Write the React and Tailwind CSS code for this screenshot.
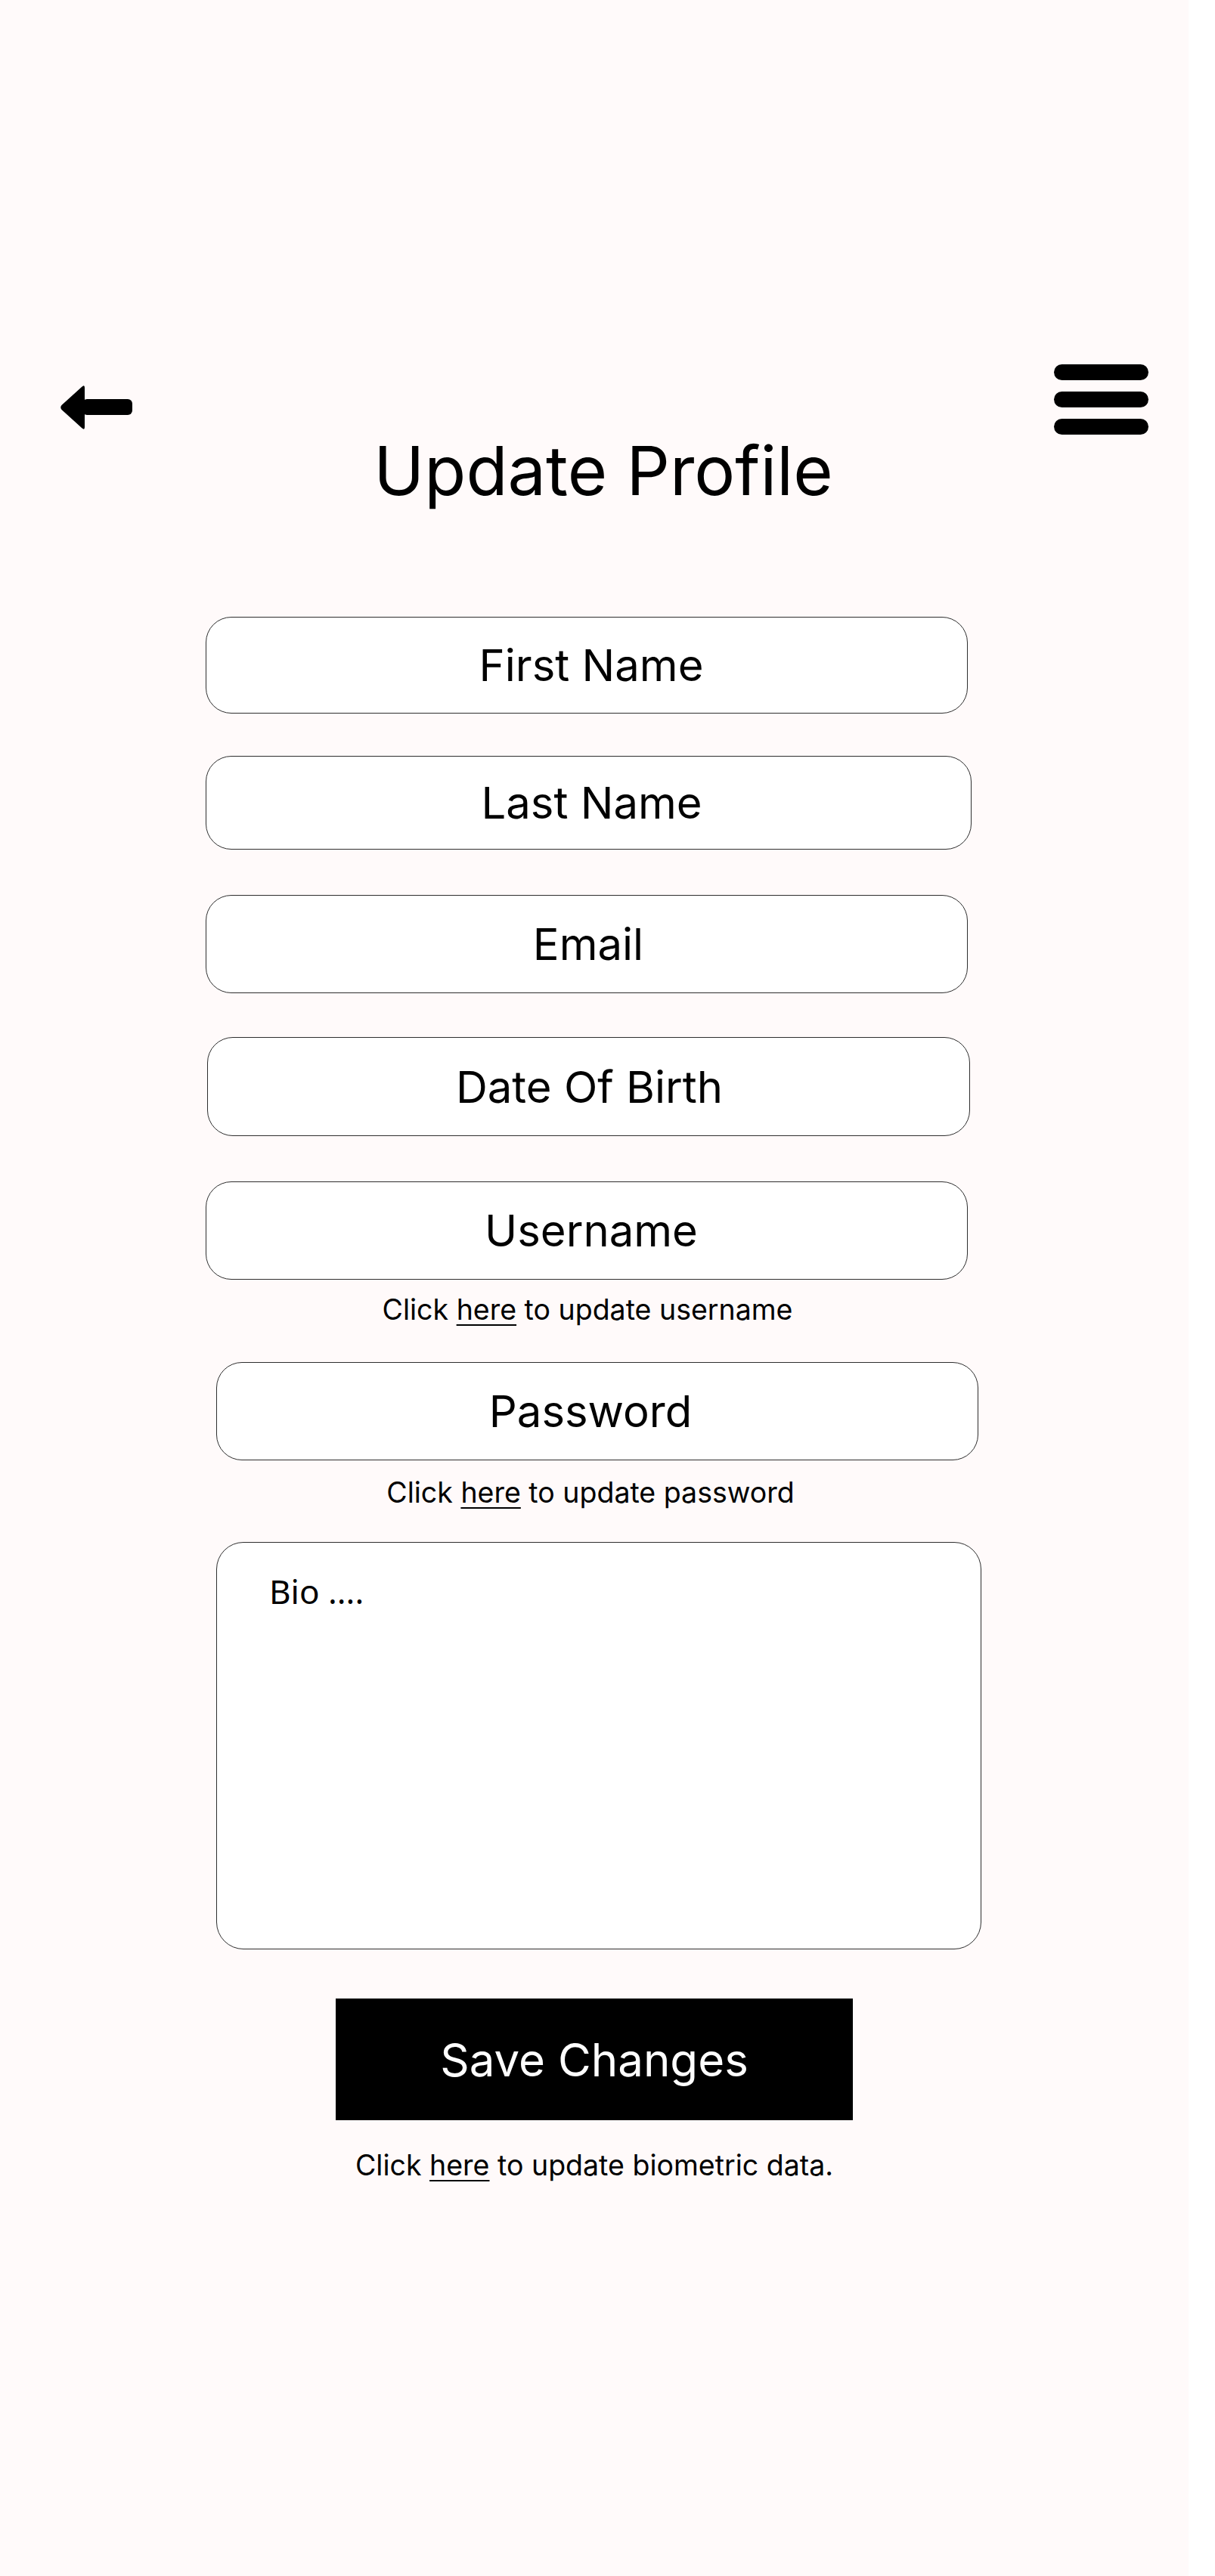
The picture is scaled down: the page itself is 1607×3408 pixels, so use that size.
import React from 'react';

const font = { fontFamily: 'Inter, "Noto Sans", sans-serif' };

// Each field sits at its own spot in the mock-up, so offsets are per field
const fields = [
    { label: 'First Name', box: 'mt-[148px] ml-[272px] w-[1008px] h-[128px] pl-[12px]' },
    { label: 'Last Name', box: 'mt-[56px] ml-[272px] w-[1013px] h-[124px] pl-[8px]' },
    { label: 'Email', box: 'mt-[60px] ml-[272px] w-[1008px] h-[130px] pl-[4px]' },
    { label: 'Date Of Birth', box: 'mt-[58px] ml-[274px] w-[1009px] h-[131px] pl-[2px]' },
    { label: 'Username', box: 'mt-[60px] ml-[272px] w-[1008px] h-[130px] pl-[12px]' },
];

const BackArrow = () => (
    <svg width="97" height="60" viewBox="0 0 97 60" className="ml-[79px] mt-[27px]">
        <path d="M33 4 Q33 -1 29 3 L2.5 27 Q0 30 2.5 33 L29 57 Q33 61 33 56 Z" fill="black" />
        <rect x="30" y="19" width="66" height="21" rx="6" fill="black" />
    </svg>
);

const Hamburger = () => (
    <div className="mr-[53px] flex flex-col gap-[15px]">
        <div className="h-[21px] w-[125px] rounded-full bg-black" />
        <div className="h-[21px] w-[125px] rounded-full bg-black" />
        <div className="h-[21px] w-[125px] rounded-full bg-black" />
    </div>
);

const ClickHere = ({ rest, className }) => (
    <p className={`text-[37.5px] leading-none text-black text-center ${className}`}>
        Click <a href="#" className="underline decoration-2 underline-offset-[6px]">here</a> {rest}
    </p>
);

const App = () => {
    return (
        <div className="bg-white min-h-[3408px]" style={font}>
            <div className="w-[1572px] min-h-[3408px] bg-[#fffafa] flex flex-col pb-[200px]">
                {/* Header */}
                <div className="pt-[482px] flex justify-between items-start">
                    <BackArrow />
                    <Hamburger />
                </div>
                <h1 className="mt-[3px] text-[90px] leading-none font-normal text-black text-center pl-[24px]">
                    Update Profile
                </h1>

                {/* Form */}
                {fields.map(f => (
                    <input
                        key={f.label}
                        placeholder={f.label}
                        className={`${f.box} block rounded-[34px] border border-[#2e2e2e] bg-white text-center text-[58px] text-black placeholder:text-black outline-none`}
                        style={font}
                    />
                ))}
                <ClickHere rest="to update username" className="mt-[21px] pr-[18px]" />

                <input
                    placeholder="Password"
                    className="mt-[50px] ml-[286px] w-[1008px] h-[130px] pr-[18px] block rounded-[34px] border border-[#2e2e2e] bg-white text-center text-[58px] text-black placeholder:text-black outline-none"
                    style={font}
                />
                <ClickHere rest="to update password" className="mt-[24px] pr-[10px]" />

                <textarea
                    placeholder="Bio ...."
                    className="mt-[47px] ml-[286px] w-[1012px] h-[539px] block resize-none rounded-[36px] border border-[#2e2e2e] bg-white pl-[69px] pt-[38px] text-[44px] leading-[52px] text-black placeholder:text-black outline-none"
                    style={{ fontFamily: '"Noto Sans", sans-serif' }}
                />

                <button className="mt-[65px] ml-[444px] w-[684px] h-[161px] bg-black text-white text-[60px] leading-none">
                    Save Changes
                </button>
                <ClickHere rest="to update biometric data." className="mt-[41px]" />
            </div>
        </div>
    );
};

export default App;
